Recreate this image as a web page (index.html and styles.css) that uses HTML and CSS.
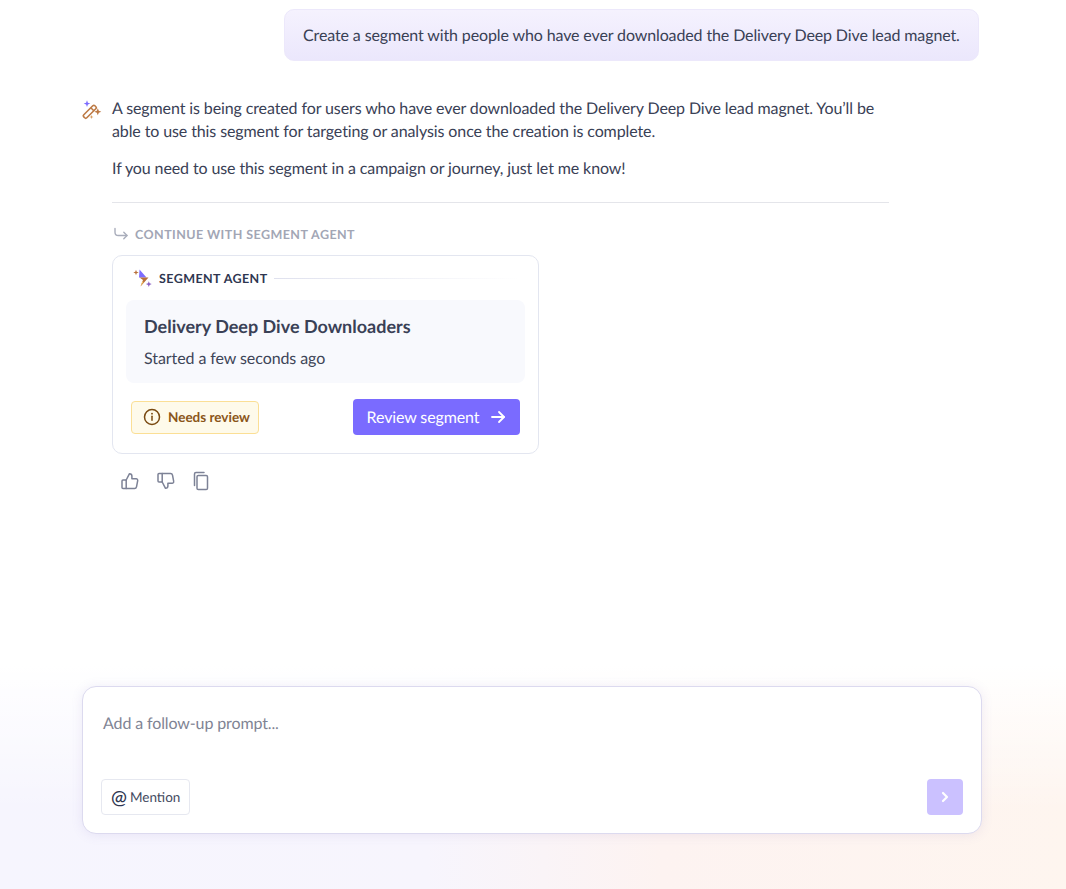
FILE: index.html
```html
<!DOCTYPE html>
<html lang="en">
<head>
<meta charset="utf-8">
<title>Segment chat</title>
<link rel="stylesheet" href="styles.css">
</head>
<body>
<div class="page">
  <main class="thread">
    <div class="user-row">
      <div class="user-bubble">Create a segment with people who have ever downloaded the Delivery Deep Dive lead magnet.</div>
    </div>
    <div class="assistant">
      <svg class="wand" width="20" height="20" viewBox="0 0 20 20" fill="none">
        <path d="M1.800 14.800 10.800 5.800a1.500 1.500 0 0 1 2.100 0l.9.9a1.500 1.500 0 0 1 0 2.100l-9 9a1.500 1.500 0 0 1-2.100 0l-.9-.9a1.500 1.500 0 0 1 0-2.100Z" stroke="#bd7a45" stroke-width="1.600"/>
        <path d="M8.800 7.800l3 3" stroke="#bd7a45" stroke-width="1.600"/>
        <path d="M5 .3l.9 2.400 2.400.9-2.400.9L5 6.900l-.9-2.400-2.400-.9 2.400-.9z" fill="#7c6cff"/>
        <path d="M15.800 8.200l1 2.500 2.500 1-2.500 1-1 2.500-1-2.500-2.500-1 2.500-1z" fill="#bd7a45"/>
        <path d="M9.500 15l.6 1.400 1.400.6-1.400.6-.6 1.400-.6-1.400-1.400-.6 1.400-.6z" fill="#d9a066"/>
      </svg>
      <div class="assistant-body">
        <p class="para">A segment is being created for users who have ever downloaded the Delivery Deep Dive lead magnet. You’ll be able to use this segment for targeting or analysis once the creation is complete.</p>
        <p class="para para-second">If you need to use this segment in a campaign or journey, just let me know!</p>
        <hr class="rule">
        <div class="continue">
          <svg width="16" height="14" viewBox="0 0 16 14" fill="none" stroke="#a9adbb" stroke-width="1.400" stroke-linecap="round" stroke-linejoin="round">
            <path d="M2 1.500v3.700a3.300 3.300 0 0 0 3.300 3.300H14"/><path d="M10.800 5.300 14 8.500l-3.200 3.200"/>
          </svg>
          <span>CONTINUE WITH SEGMENT AGENT</span>
        </div>
        <section class="card">
          <div class="card-head">
            <svg width="20" height="20" viewBox="0 0 20 20">
              <path d="M6.500 1.500 13.500 9.500H6z" fill="#7c6cff"/>
              <path d="M6.500 9.500h9L7.500 18.500l2.500-6.500z" fill="#b8703a"/>
              <path d="M9.300 13.200l1.200.9-3 4.400z" fill="#f6c465"/>
              <path d="M3 1.800l.7 2 2 .7-2 .7-.7 2-.7-2-2-.7 2-.7z" fill="#b8703a"/>
              <path d="M15.800 13.200l.8 2.100 2.100.8-2.100.8-.8 2.100-.8-2.100-2.100-.8 2.100-.8z" fill="#8a60c4"/>
            </svg>
            <span class="agent-name">SEGMENT AGENT</span>
            <span class="head-line"></span>
          </div>
          <div class="card-panel">
            <h2 class="card-title">Delivery Deep Dive Downloaders</h2>
            <p class="card-sub">Started a few seconds ago</p>
          </div>
          <div class="card-foot">
            <span class="badge">
              <svg width="18" height="18" viewBox="0 0 18 18" fill="none" stroke="#7a4a12" stroke-width="1.500" stroke-linecap="round">
                <circle cx="9" cy="9" r="7.500"/><path d="M9 8.300v4"/><path d="M9 5.600v.1" stroke-width="1.800"/>
              </svg>
              Needs review
            </span>
            <button class="review-btn" type="button">Review segment
              <svg width="16" height="16" viewBox="0 0 16 16" fill="none" stroke="#fff" stroke-width="1.800" stroke-linecap="round" stroke-linejoin="round">
                <path d="M2 8h12"/><path d="M9 3l5 5-5 5"/>
              </svg>
            </button>
          </div>
        </section>
        <div class="actions">
          <svg width="20" height="20" viewBox="0 0 20 20" fill="none" stroke="#7d8296" stroke-width="1.500" stroke-linejoin="round" stroke-linecap="round">
            <path d="M6.200 9v8.500H3a1 1 0 0 1-1-1V10a1 1 0 0 1 1-1z"/>
            <path d="M6.200 9l3.300-6.300c1.500 0 2.400 1 2.400 2.300v2.800h4.300c1 0 1.700.9 1.500 1.800l-1.200 6.200c-.2.900-.9 1.700-1.900 1.700H6.200"/>
          </svg>
          <svg width="20" height="20" viewBox="0 0 20 20" fill="none" stroke="#7d8296" stroke-width="1.500" stroke-linejoin="round" stroke-linecap="round">
            <path d="M6.200 11V2.500H3a1 1 0 0 0-1 1V10a1 1 0 0 0 1 1z"/>
            <path d="M6.200 11l3.300 6.300c1.500 0 2.400-1 2.400-2.300v-2.800h4.300c1 0 1.700-.9 1.500-1.800l-1.200-6.200c-.2-.9-.9-1.700-1.900-1.700H6.200"/>
          </svg>
          <svg width="20" height="20" viewBox="0 0 20 20" fill="none" stroke="#7d8296" stroke-width="1.500" stroke-linejoin="round" stroke-linecap="round">
            <rect x="5" y="4.500" width="10.500" height="14" rx="1.300"/>
            <path d="M2.500 14.500V3A1.500 1.500 0 0 1 4 1.500h8"/>
          </svg>
        </div>
      </div>
    </div>
  </main>
  <footer class="composer-zone">
    <div class="composer">
      <div class="placeholder">Add a follow-up prompt...</div>
      <div class="composer-foot">
        <button class="mention" type="button"><span class="at">@</span>Mention</button>
        <button class="send" type="button">
          <svg width="10" height="12" viewBox="0 0 10 12" fill="none" stroke="#fff" stroke-width="2.200" stroke-linecap="round" stroke-linejoin="round"><path d="M3 2l4 4-4 4"/></svg>
        </button>
      </div>
    </div>
  </footer>
</div>
</body>
</html>
```
FILE: styles.css
```css
* { box-sizing: border-box; }
html, body { margin: 0; height: 100%; }
body {
  font-family: Lato, "Liberation Sans", sans-serif;
  font-variant-ligatures: none;
  color: #3a4156;
  background: #fff;
  overflow: hidden;
  text-rendering: geometricPrecision;
}
button { font-variant-ligatures: none; text-rendering: geometricPrecision; }
.page {
  height: 889px;
  display: flex;
  flex-direction: column;
  justify-content: space-between;
  background:
    linear-gradient(to bottom, #fff 665px, rgba(255,255,255,0) 810px),
    linear-gradient(to right, #f6f5fe 0, #f7f5fd 40%, #fdf3f1 62%, #fef5ef 100%);
}
.thread {
  padding: 9px 85px 0 82px;
}
.user-row { display: flex; justify-content: flex-end; margin-right: 2px; }
.user-bubble {
  height: 52px;
  width: 695px;
  padding: 0 18px;
  display: flex;
  align-items: center;
  font-size: 16px;
  letter-spacing: -.12px;
  white-space: nowrap;
  border: 1px solid #ece8fb;
  border-radius: 10px;
  background: linear-gradient(to bottom, #f5f2fe, #ebe7fc);
}
.assistant {
  display: flex;
  gap: 10px;
  margin-top: 35px;
}
.wand { flex: none; margin-top: 4px; }
.assistant-body { width: 777px; padding-top: 1px; }
.para {
  margin: 0;
  font-size: 16px;
  line-height: 23px;
  letter-spacing: -.11px;
}
.para-second { margin-top: 14px; }
.rule {
  margin: 22px 0 0;
  border: 0;
  border-top: 1px solid #e4e5ea;
}
.continue {
  display: flex;
  align-items: center;
  gap: 6px;
  margin-top: 23px;
  height: 16px;
  font-size: 12.500px;
  font-weight: 700;
  letter-spacing: .44px;
  color: #a2a6b5;
  padding-left: 1px;
}
.card {
  margin-top: 13px;
  width: 427px;
  height: 199px;
  border: 1px solid #e3e6f0;
  border-radius: 10px;
  padding: 0 18px 0 13px;
  background: #fff;
}
.card-head {
  display: flex;
  align-items: center;
  height: 44px;
  padding: 0 0 0 7px;
}
.agent-name {
  margin-left: 6px;
  font-size: 12.500px;
  font-weight: 700;
  letter-spacing: .42px;
  color: #2e3650;
}
.head-line {
  flex: 1;
  height: 1px;
  margin-left: 6px;
  background: linear-gradient(to right, #dfe1ee, rgba(223,225,238,0));
}
.card-panel {
  width: 399px;
  height: 83px;
  padding: 14px 18px 0;
  border-radius: 8px;
  background: #f8f9fd;
}
.card-title {
  margin: 0;
  font-size: 18px;
  line-height: 24px;
  font-weight: 700;
  color: #3a4156;
}
.card-sub {
  margin: 10px 0 0;
  font-size: 16px;
  line-height: 22px;
  letter-spacing: -.08px;
  color: #3e4558;
}
.card-foot {
  display: flex;
  align-items: center;
  justify-content: space-between;
  margin-top: 16px;
  padding-left: 5px;
}
.badge {
  display: flex;
  align-items: center;
  gap: 7px;
  width: 128px;
  height: 33px;
  padding-left: 11px;
  font-size: 13.500px;
  font-weight: 700;
  color: #8a5518;
  background: #fefaea;
  border: 1px solid #fbdf95;
  border-radius: 4px;
}
.review-btn {
  display: flex;
  align-items: center;
  justify-content: center;
  gap: 11px;
  width: 167px;
  height: 36px;
  padding: 0;
  border: 0;
  border-radius: 4px;
  background: #7a6bff;
  color: #fff;
  font: 400 16px Lato, sans-serif;
  letter-spacing: -.12px;
}
.actions {
  display: flex;
  gap: 16px;
  margin-top: 17px;
  padding-left: 8px;
}
.composer-zone {
  padding: 0 84px 55px 82px;
}
.composer {
  height: 148px;
  display: flex;
  flex-direction: column;
  justify-content: space-between;
  border: 1px solid #dcdaef;
  border-radius: 14px;
  background: #fff;
  box-shadow: 0 1px 12px rgba(120,110,190,.12);
  padding: 26px 18px 18px;
}
.placeholder {
  padding-left: 2px;
  font-size: 16px;
  line-height: 22px;
  letter-spacing: -.12px;
  color: #7f8494;
}
.composer-foot {
  display: flex;
  justify-content: space-between;
  align-items: center;
}
.mention {
  display: flex;
  align-items: center;
  gap: 3px;
  width: 89px;
  height: 36px;
  padding: 0 0 0 9px;
  border: 1px solid #e6e8f0;
  border-radius: 4px;
  background: #fff;
  font: 400 13.500px Lato, sans-serif;
  color: #434a5e;
}
.at { font-size: 19px; line-height: 1; font-weight: 500; color: #2e3650; }
.send {
  display: flex;
  align-items: center;
  justify-content: center;
  width: 36px;
  height: 36px;
  padding: 0;
  border: 0;
  border-radius: 4px;
  background: #cbc1ff;
}
```
